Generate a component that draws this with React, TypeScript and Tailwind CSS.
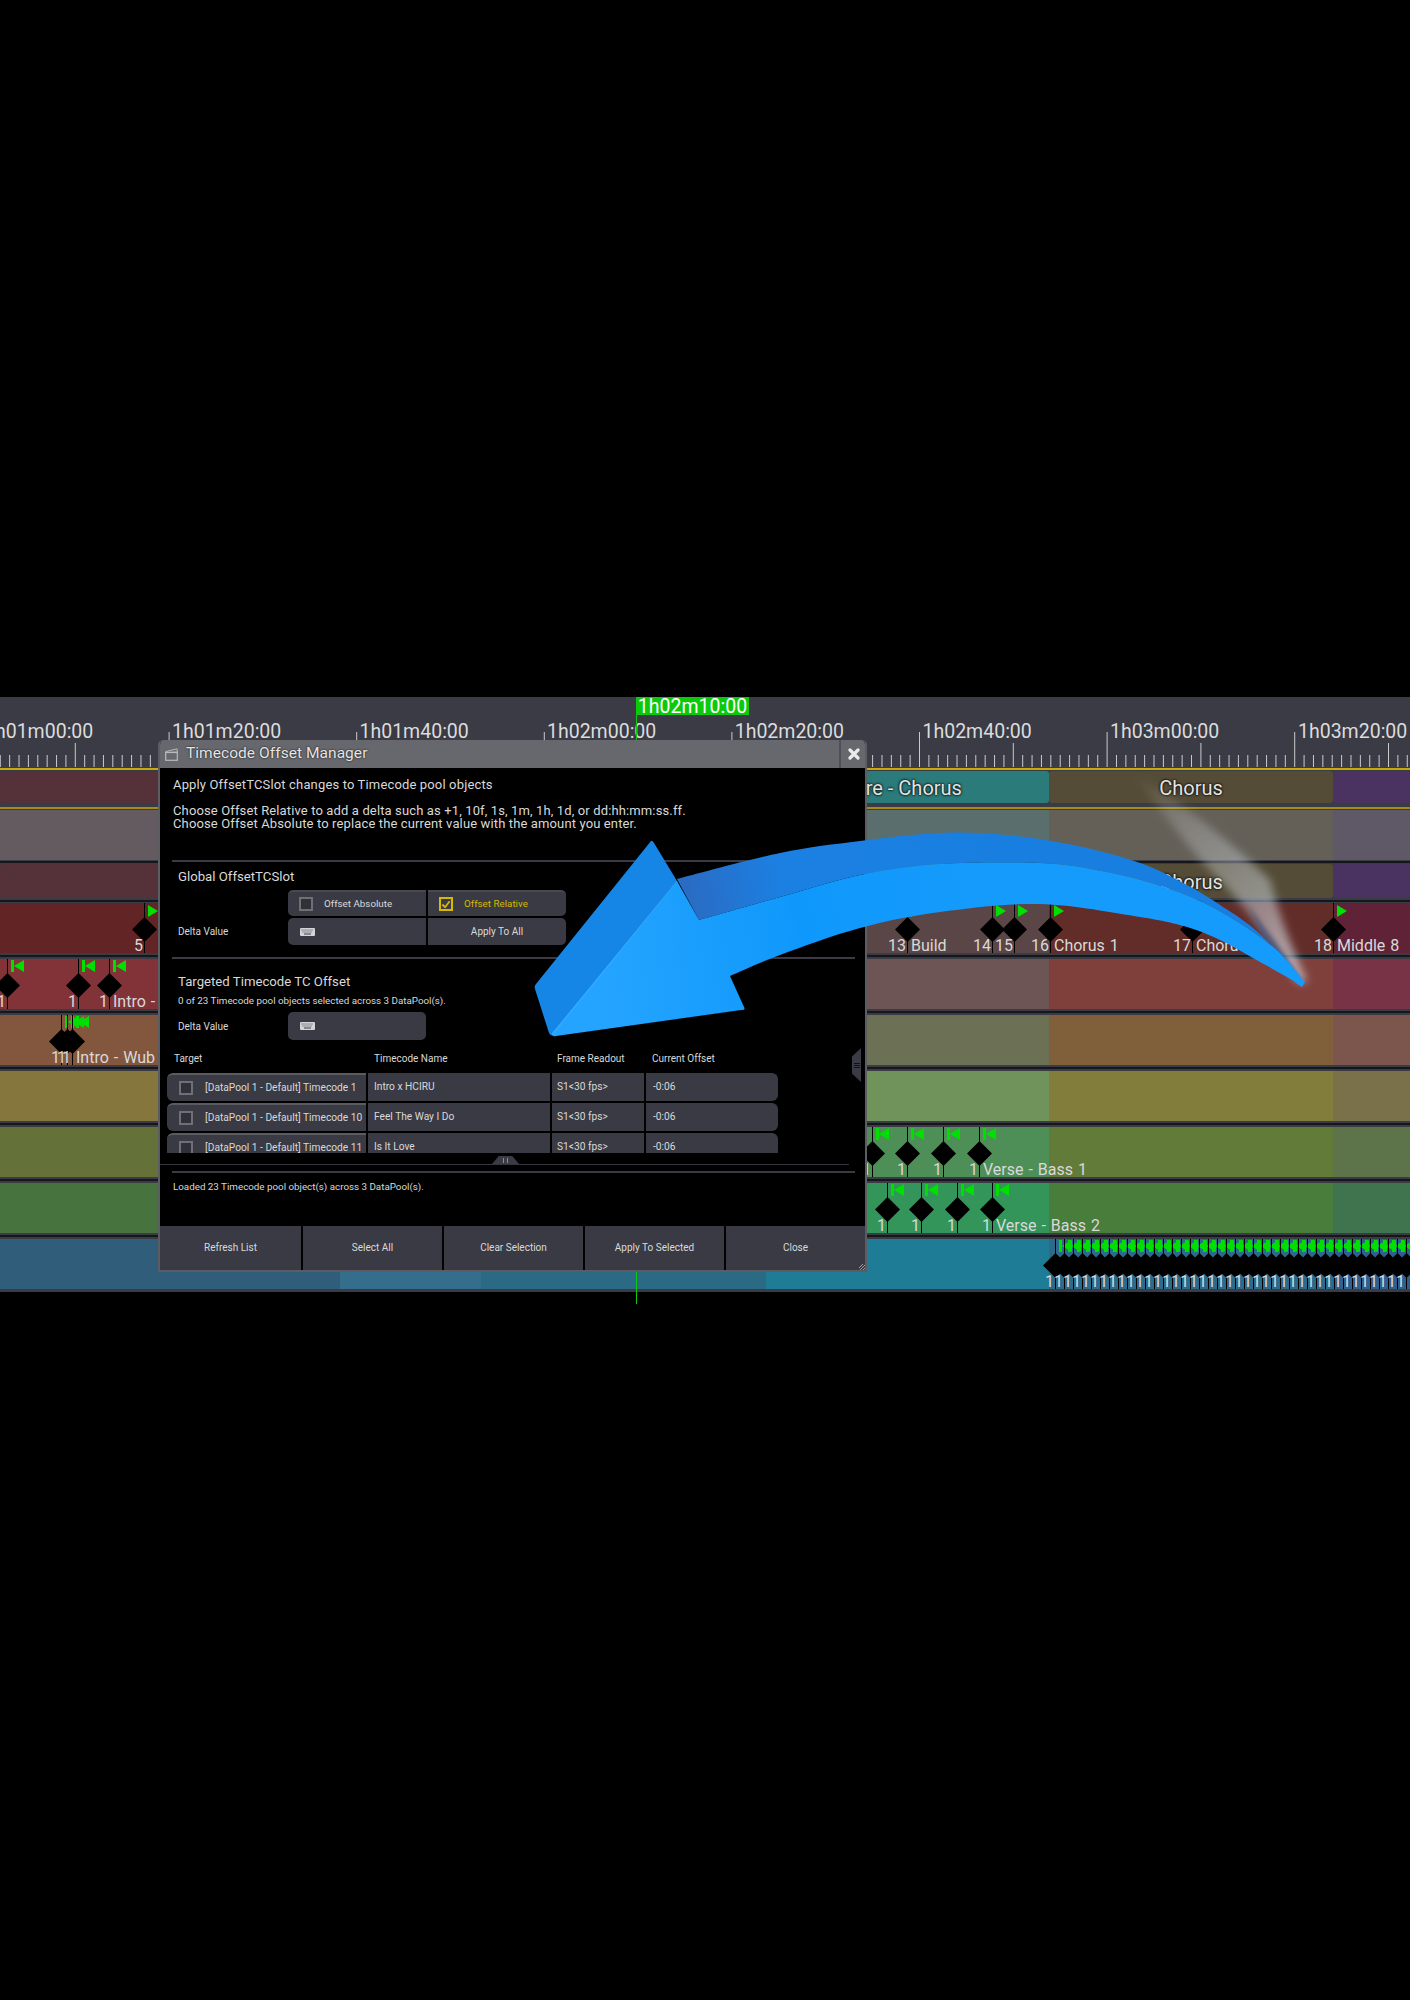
import React from 'react'

type Marker = { x: number; label?: string; name?: string; flag: 'play' | 'back' }
type Row = { h: string; gap?: string; cols: string[]; rounded?: boolean; text?: (string | null)[]; markers?: Marker[] }

const majors = [
  { x: -19, t: '1h01m00:00' },
  { x: 169, t: '1h01m20:00' },
  { x: 356.5, t: '1h01m40:00' },
  { x: 544, t: '1h02m00:00' },
  { x: 731.7, t: '1h02m20:00' },
  { x: 919.5, t: '1h02m40:00' },
  { x: 1107, t: '1h03m00:00' },
  { x: 1295, t: '1h03m20:00' },
]

const tailMarkers: Marker[] = Array.from({ length: 40 }, (_, i) => ({ x: 1055 + i * 9, label: '1', flag: 'back' as const }))

const rows: Row[] = [
  {
    h: 'h-[32px]',
    rounded: true,
    cols: ['bg-[#55323a]', 'bg-[#55323a]', 'bg-[#55323a]', 'bg-[#2a7b7a]', 'bg-[#544c37]', 'bg-[#4a3360]'],
    text: [null, null, null, 'Pre - Chorus', 'Chorus', null],
  },
  { h: 'h-[50px]', gap: 'h-[4px]', cols: ['bg-[#645b60]', 'bg-[#645b60]', 'bg-[#645b60]', 'bg-[#5a6e6d]', 'bg-[#646058]', 'bg-[#5f5867]'] },
  {
    h: 'h-[34px]',
    gap: 'h-[5px]',
    rounded: true,
    cols: ['bg-[#55323a]', 'bg-[#55323a]', 'bg-[#55323a]', 'bg-[#2a7b7a]', 'bg-[#544c37]', 'bg-[#4a3360]'],
    text: [null, null, null, null, 'Chorus', null],
  },
  {
    h: 'h-[50px]',
    gap: 'h-[6px]',
    cols: ['bg-[#622425]', 'bg-[#622425]', 'bg-[#622425]', 'bg-[#5a4646]', 'bg-[#622d29]', 'bg-[#5f2237]'],
    markers: [
      { x: 144, label: '5', flag: 'play' },
      { x: 907, label: '13', name: 'Build', flag: 'play' },
      { x: 992, label: '14', flag: 'play' },
      { x: 1014, label: '15', flag: 'play' },
      { x: 1050, label: '16', name: 'Chorus 1', flag: 'play' },
      { x: 1192, label: '17', name: 'Chorus 2', flag: 'play' },
      { x: 1333, label: '18', name: 'Middle 8', flag: 'play' },
    ],
  },
  {
    h: 'h-[50px]',
    gap: 'h-[6px]',
    cols: ['bg-[#823338]', 'bg-[#823338]', 'bg-[#823338]', 'bg-[#6e5555]', 'bg-[#7f403c]', 'bg-[#793347]'],
    markers: [
      { x: 7, label: '1', flag: 'back' },
      { x: 78, label: '1', flag: 'back' },
      { x: 109, label: '1', name: 'Intro -', flag: 'back' },
    ],
  },
  {
    h: 'h-[50px]',
    gap: 'h-[6px]',
    cols: ['bg-[#83563e]', 'bg-[#83563e]', 'bg-[#83563e]', 'bg-[#6c7155]', 'bg-[#805f3b]', 'bg-[#7c564c]'],
    markers: [
      { x: 61, label: '1', flag: 'back' },
      { x: 67, label: '1', flag: 'back' },
      { x: 72, label: '1', name: 'Intro - Wub', flag: 'back' },
    ],
  },
  { h: 'h-[50px]', gap: 'h-[6px]', cols: ['bg-[#84763c]', 'bg-[#84763c]', 'bg-[#84763c]', 'bg-[#70925b]', 'bg-[#837d3c]', 'bg-[#7a714a]'] },
  {
    h: 'h-[50px]',
    gap: 'h-[6px]',
    cols: ['bg-[#647138]', 'bg-[#647138]', 'bg-[#647138]', 'bg-[#4e8e57]', 'bg-[#637b39]', 'bg-[#5d734a]'],
    markers: [
      { x: 872, label: '1', flag: 'back' },
      { x: 907, label: '1', flag: 'back' },
      { x: 943, label: '1', flag: 'back' },
      { x: 979, label: '1', name: 'Verse - Bass 1', flag: 'back' },
    ],
  },
  {
    h: 'h-[50px]',
    gap: 'h-[6px]',
    cols: ['bg-[#47733e]', 'bg-[#47733e]', 'bg-[#47733e]', 'bg-[#339559]', 'bg-[#487d3b]', 'bg-[#40744f]'],
    markers: [
      { x: 887, label: '1', flag: 'back' },
      { x: 921, label: '1', flag: 'back' },
      { x: 957, label: '1', flag: 'back' },
      { x: 992, label: '1', name: 'Verse - Bass 2', flag: 'back' },
    ],
  },
  {
    h: 'h-[50px]',
    cols: ['bg-[#2f5d7a]', 'bg-[#356d8d]', 'bg-[#2a6a85]', 'bg-[#1f7c96]', 'bg-[#2b6a8a]', 'bg-[#2f5f8f]'],
    markers: tailMarkers,
  },
]

// catmull-rom through the points, used for the big arrow's curved edges
function curve(pts: number[][]) {
  let d = ''
  for (let i = 0; i < pts.length - 1; i++) {
    const p0 = pts[i - 1] ?? pts[i]
    const p1 = pts[i]
    const p2 = pts[i + 1]
    const p3 = pts[i + 2] ?? p2
    const c1 = [p1[0] + (p2[0] - p0[0]) / 6, p1[1] + (p2[1] - p0[1]) / 6]
    const c2 = [p2[0] - (p3[0] - p1[0]) / 6, p2[1] - (p3[1] - p1[1]) / 6]
    d += ` C${c1[0]} ${c1[1]} ${c2[0]} ${c2[1]} ${p2[0]} ${p2[1]}`
  }
  return d
}

const bandTop = [[677, 879], [780, 853], [860, 841], [940, 833], [1007, 835], [1073, 845], [1140, 863], [1187, 885], [1220, 905], [1253, 928], [1287, 962], [1305, 982]]
const bandLow = [[699, 920], [780, 897], [860, 875], [940, 864], [1040, 863], [1107, 872], [1173, 890], [1223, 913], [1273, 947], [1305, 982]]
const shaftLow = [[730, 976], [780, 955], [860, 928], [940, 912], [1040, 904], [1140, 917], [1187, 927], [1220, 940], [1253, 958], [1287, 977], [1302, 987]]

function BigArrow() {
  const band = `M677 879${curve(bandTop)} L1305 982${curve([...bandLow].reverse())} Z`
  const front = `M699 920${curve(bandLow)} L1302 987${curve([...shaftLow].reverse())} L744 1007 Q746 1010 741 1010 L556 1036 Q551 1037 552 1033 L677 881 Z`
  return (
    <svg className="absolute left-0 top-0 pointer-events-none" width="1410" height="620" viewBox="0 697 1410 620" fill="none">
      <defs>
        <linearGradient id="smoke" x1="1140" y1="775" x2="1300" y2="985" gradientUnits="userSpaceOnUse">
          <stop offset="0" stopColor="#fff" stopOpacity="0.02" />
          <stop offset="0.3" stopColor="#d8dde0" stopOpacity="0.28" />
          <stop offset="0.65" stopColor="#cdd6e0" stopOpacity="0.5" />
          <stop offset="1" stopColor="#dfe8f0" stopOpacity="0.7" />
        </linearGradient>
        <linearGradient id="band" x1="690" y1="900" x2="1000" y2="840" gradientUnits="userSpaceOnUse">
          <stop offset="0" stopColor="#2a6cc4" />
          <stop offset="0.3" stopColor="#1b80e2" />
          <stop offset="1" stopColor="#187fe0" />
        </linearGradient>
        <linearGradient id="front" x1="600" y1="950" x2="1000" y2="900" gradientUnits="userSpaceOnUse">
          <stop offset="0" stopColor="#24a4ff" />
          <stop offset="0.5" stopColor="#0f98fb" />
          <stop offset="1" stopColor="#159bfb" />
        </linearGradient>
        <filter id="soft" x="-20%" y="-20%" width="140%" height="140%">
          <feGaussianBlur stdDeviation="4" />
        </filter>
        <filter id="softer" x="-20%" y="-20%" width="140%" height="140%">
          <feGaussianBlur stdDeviation="2" />
        </filter>
      </defs>
      <path d="M1135 775 C1180 800 1240 850 1270 880 C1280 920 1295 955 1307 982 L1298 982 C1275 945 1245 905 1215 875 C1190 850 1160 810 1135 775 Z" fill="url(#smoke)" filter="url(#soft)" />
      <path d="M1248 905 C1265 930 1285 955 1303 982 L1292 975 C1275 955 1258 930 1248 905 Z" fill="#34598f" opacity="0.7" filter="url(#softer)" />
      <path d="M651 841 Q652 840 654 843 L677 881 L552 1035 Q551 1036 549 1033 L535 989 Q534 986 536 984 Z" fill="#1686e6" />
      <path d={band} fill="url(#band)" />
      <path d={front} fill="url(#front)" />
      <path d="M552 1035 L677 881" stroke="#3fb2ff" strokeWidth="1" opacity="0.7" />
    </svg>
  )
}

function Flag({ kind }: { kind: 'play' | 'back' }) {
  if (kind === 'play') {
    return (
      <svg className="absolute left-[4px] top-[2px]" width="10" height="12" viewBox="0 0 10 12">
        <polygon points="0,0 10,6 0,12" fill="#00e000" />
      </svg>
    )
  }
  return (
    <svg className="absolute left-[4px] top-[1px]" width="13" height="12" viewBox="0 0 13 12">
      <rect x="0" y="0" width="3" height="12" fill="#00e000" />
      <polygon points="13,0 3,6 13,12" fill="#00e000" />
    </svg>
  )
}

function TimelineMarker({ m }: { m: Marker }) {
  return (
    <div className="absolute top-0 bottom-0 w-px bg-black" style={{ left: m.x }}>
      <Flag kind={m.flag} />
      <svg className="absolute left-[-12px] top-[14px]" width="25" height="25" viewBox="0 0 25 25">
        <polygon points="12.5,0 25,12.5 12.5,25 0,12.5" fill="#000" />
      </svg>
      {m.label && (
        <span className="absolute right-[2px] bottom-0 text-[16px] leading-[14px] text-[#d9d9d9] whitespace-nowrap">{m.label}</span>
      )}
      {m.name && (
        <span className="absolute left-[4px] bottom-0 text-[16px] leading-[14px] text-[#d9d9d9] whitespace-nowrap [word-spacing:1px]">{m.name}</span>
      )}
    </div>
  )
}

function TimelineRow({ row }: { row: Row }) {
  return (
    <div className={`relative grid grid-cols-[340px_141px_285px_283px_284px_77px] ${row.h}`}>
      {row.cols.map((c, i) => (
        <div key={i} className={`${c} ${row.rounded ? 'rounded-[3px]' : ''} flex items-center justify-center pt-[2px] text-[20px] text-[#e4e4e4] [text-shadow:0_0_3px_#000,0_0_2px_#000] whitespace-nowrap`}>
          {row.text?.[i]}
        </div>
      ))}
      {row.markers?.map((m, i) => <TimelineMarker key={i} m={m} />)}
    </div>
  )
}

function Checkbox({ on }: { on?: boolean }) {
  return (
    <span className={`w-[14px] h-[14px] border-2 flex items-center justify-center shrink-0 ${on ? 'border-[#d6b900]' : 'border-[#6f7075] bg-[#303138]'}`}>
      {on && (
        <svg width="11" height="11" viewBox="0 0 11 11" fill="none">
          <path d="M1.5 5.5 L4.5 8.5 L9.5 2" stroke="#d6b900" strokeWidth="2" />
        </svg>
      )}
    </span>
  )
}

function KeyboardIcon() {
  return (
    <svg width="15" height="8" viewBox="0 0 15 8" className="shrink-0">
      <rect width="15" height="8" rx="1" fill="#d4d4d8" />
      <g fill="#3a3b44">
        <rect x="1.5" y="1.5" width="1" height="1" />
        <rect x="3.5" y="1.5" width="1" height="1" />
        <rect x="5.5" y="1.5" width="1" height="1" />
        <rect x="7.5" y="1.5" width="1" height="1" />
        <rect x="9.5" y="1.5" width="1" height="1" />
        <rect x="11.5" y="1.5" width="1" height="1" />
        <rect x="2.5" y="3.5" width="1" height="1" />
        <rect x="4.5" y="3.5" width="1" height="1" />
        <rect x="6.5" y="3.5" width="1" height="1" />
        <rect x="8.5" y="3.5" width="1" height="1" />
        <rect x="10.5" y="3.5" width="1" height="1" />
        <rect x="4" y="5.5" width="7" height="1" />
      </g>
    </svg>
  )
}

function ClapperIcon() {
  return (
    <svg width="13" height="13" viewBox="0 0 13 13" fill="none" className="shrink-0">
      <rect x="0.7" y="4.5" width="11.6" height="7.8" stroke="#b9babd" strokeWidth="1.2" />
      <path d="M0.7 3.6 L12 0.9 L12.3 4 L0.7 4.5 Z" stroke="#b9babd" strokeWidth="1" />
    </svg>
  )
}

const Divider = ({ className }: { className: string }) => <div className={`h-[2px] -ml-px w-[683px] bg-[#3a3b44] ${className}`} />

const tableRows = [
  { target: '[DataPool 1 - Default] Timecode 1', name: 'Intro x HCIRU' },
  { target: '[DataPool 1 - Default] Timecode 10', name: 'Feel The Way I Do' },
  { target: '[DataPool 1 - Default] Timecode 11', name: 'Is It Love' },
]

function OffsetManager() {
  return (
    <div className="absolute left-[158px] top-[43px] w-[709px] h-[532px] flex flex-col bg-black border-x-2 border-b-2 border-[#5c5d63] rounded-t-[5px] overflow-hidden text-[#d9d9d9]">
      <div className="h-[28px] shrink-0 -mx-[2px] bg-[#66686d] flex items-center">
        <div className="pl-[7px] pr-[8px]"><ClapperIcon /></div>
        <span className="text-[15.5px] tracking-[0.05px] text-[#e6e6e6] [text-shadow:0_0_2px_#000]">Timecode Offset Manager</span>
        <div className="ml-auto w-[28px] pr-px h-full border-l-2 border-[#505156] flex items-center justify-center">
          <svg width="12" height="12" viewBox="0 0 12 12">
            <path d="M2 2 L10 10 M10 2 L2 10" stroke="#eaeaea" strokeWidth="3.2" strokeLinecap="round" />
          </svg>
        </div>
      </div>

      <div className="relative flex-1 flex flex-col pl-[13px]">
        <p className="mt-[10px] text-[13px] leading-[13px] tracking-[0.15px]">Apply OffsetTCSlot changes to Timecode pool objects</p>
        <p className="mt-[13px] text-[13px] leading-[13px] tracking-[0.13px]">
          Choose Offset Relative to add a delta such as +1, 10f, 1s, 1m, 1h, 1d, or dd:hh:mm:ss.ff.
          <br />
          Choose Offset Absolute to replace the current value with the amount you enter.
        </p>
        <Divider className="mt-[30px]" />

        <h3 className="mt-[7px] pl-[5px] text-[13.2px] leading-[16px]">Global OffsetTCSlot</h3>
        <div className="mt-[5px] pl-[5px] grid grid-cols-[110px_140px_138px] grid-rows-[26px_27px] gap-y-[2px] text-[9.8px]">
          <div />
          <div className="mr-[2px] bg-[#393a43] rounded-l-[5px] border-t-2 border-[#48494f] flex items-center gap-[11px] pl-[11px]">
            <Checkbox />
            <span>Offset Absolute</span>
          </div>
          <div className="bg-[#393a43] rounded-r-[5px] border-t-2 border-[#48494f] flex items-center gap-[11px] pl-[11px] text-[#d6b900]">
            <Checkbox on />
            <span>Offset Relative</span>
          </div>
          <div className="flex items-center text-[10px]">Delta Value</div>
          <div className="mr-[2px] bg-[#393a43] rounded-l-[5px] flex items-center pl-[12px]"><KeyboardIcon /></div>
          <div className="bg-[#393a43] rounded-r-[5px] flex items-center justify-center text-[10px]">Apply To All</div>
        </div>
        <Divider className="mt-[12px]" />

        <h3 className="mt-[15px] pl-[5px] text-[13.2px] leading-[16px]">Targeted Timecode TC Offset</h3>
        <p className="mt-[4px] pl-[5px] text-[9.8px] leading-[14px]">0 of 23 Timecode pool objects selected across 3 DataPool(s).</p>
        <div className="mt-[4px] pl-[5px] flex items-center h-[28px] text-[10px]">
          <span className="w-[110px]">Delta Value</span>
          <div className="w-[138px] h-full bg-[#393a43] rounded-[5px] flex items-center pl-[12px]"><KeyboardIcon /></div>
        </div>

        <div className="mt-[12px] -ml-[6px] grid grid-cols-[199px_182px_92px_132px] gap-x-[2px] text-[10px] leading-[14px]">
          <span className="pl-[7px]">Target</span>
          <span className="pl-[6px]">Timecode Name</span>
          <span className="pl-[5px]">Frame Readout</span>
          <span className="pl-[6px]">Current Offset</span>
        </div>
        <div className="mt-[7px] -ml-[6px] h-[80px] overflow-hidden flex flex-col gap-y-[2px] text-[10.2px]">
          {tableRows.map((r) => (
            <div key={r.target} className="h-[28px] shrink-0 grid grid-cols-[199px_182px_92px_132px] gap-x-[2px]">
              <div className="bg-[#393a43] rounded-l-[6px] border-t-2 border-[#5a5b61] flex items-center gap-[8px] pl-[12px] whitespace-nowrap">
                <Checkbox />
                <span className="pl-[4px]">{r.target}</span>
              </div>
              <div className="bg-[#393a43] flex items-center pl-[6px]">{r.name}</div>
              <div className="bg-[#393a43] flex items-center pl-[5px]">S1&lt;30 fps&gt;</div>
              <div className="bg-[#393a43] rounded-r-[6px] flex items-center pl-[7px]">-0:06</div>
            </div>
          ))}
        </div>

        {/* horizontal scroll handle + its rail */}
        <div className="relative h-[12px] -ml-[13px]">
          <div className="absolute left-[332px] top-[3px] w-[27px] h-[8px] bg-[#3a3b44] [clip-path:polygon(25%_0,75%_0,100%_100%,0_100%)] flex items-center justify-center">
            <div className="w-[5px] h-[5px] border-x border-[#8a8b90]" />
          </div>
          <div className="absolute left-0 bottom-0 w-[689px] h-px bg-[#34353d]" />
        </div>
        <Divider className="mt-[6px]" />

        <p className="mt-[7px] text-[9.8px] leading-[14px]">Loaded 23 Timecode pool object(s) across 3 DataPool(s).</p>

        <div className="mt-auto -ml-[13px] h-[44px] grid grid-cols-[141px_139px_139px_139px_139px] gap-x-[2px] text-[10px]">
          {['Refresh List', 'Select All', 'Clear Selection', 'Apply To Selected', 'Close'].map((b) => (
            <div key={b} className="bg-[#393a43] flex items-center justify-center pb-[2px]">{b}</div>
          ))}
        </div>

        {/* vertical scroll handle */}
        <div className="absolute left-[692px] top-[280px] w-[9px] h-[34px] bg-[#3a3b44] [clip-path:polygon(0_25%,100%_0,100%_100%,0_75%)] flex flex-col items-center justify-center gap-px">
          <div className="w-[6px] h-px bg-[#111]" />
          <div className="w-[6px] h-px bg-[#111]" />
          <div className="w-[6px] h-px bg-[#111]" />
        </div>
        <svg className="absolute right-[-2px] bottom-[-2px]" width="9" height="9" viewBox="0 0 9 9">
          <path d="M1 8 L8 1 M4 8 L8 4 M1 5 L5 1" stroke="#a0a1a5" strokeWidth="1" />
        </svg>
      </div>
    </div>
  )
}

export default function App() {
  return (
    <div className="min-h-[2000px] bg-black pt-[697px] [font-family:Roboto,sans-serif]">
      <div className="relative h-[595px] overflow-x-clip bg-[#3a3b44]">
        {/* Ruler */}
        <div className="relative h-[71px]">
          {majors.map((m) => (
            <span key={m.t} className="absolute top-[23px] text-[19.5px] leading-[24px] text-[#dcdcdc] whitespace-nowrap" style={{ left: m.x + 3 }}>
              {m.t}
            </span>
          ))}
          <svg className="absolute left-0 top-0" width="1410" height="71" viewBox="0 0 1410 71">
            {Array.from({ length: 160 }, (_, i) => {
              const x = -19 + i * 9.38
              const major = i % 20 === 0
              const mid = i % 10 === 0
              return <rect key={i} x={x} y={major ? 35 : mid ? 46 : 58} width="1" height={major ? 35 : mid ? 24 : 12} fill="#c9cacc" />
            })}
          </svg>
        </div>
        <div className="h-[2px] bg-[#c7a90c]" />
        <div className="h-px" />

        <TimelineRow row={rows[0]} />
        {/* second yellow track line */}
        <div className="h-[7px] pt-[4px]">
          <div className="h-[2px] bg-[#a68c14]" />
        </div>
        {rows.slice(1).map((row, i) => (
          <React.Fragment key={i}>
            <TimelineRow row={row} />
            {row.gap && (
              <div className={`flex flex-col justify-center ${row.gap}`}>
                <div className="h-[2px] bg-[#16171b]" />
              </div>
            )}
          </React.Fragment>
        ))}

        {/* Playhead */}
        <div className="absolute left-[636px] top-0 w-[113px] h-[18px] pt-px bg-[#0cc90c] flex items-center justify-center text-[19.5px] text-white">1h02m10:00</div>
        <div className="absolute left-[636px] top-[18px] w-px h-[589px] bg-[#0cc90c]" />

        <OffsetManager />
        <BigArrow />
      </div>
    </div>
  )
}
